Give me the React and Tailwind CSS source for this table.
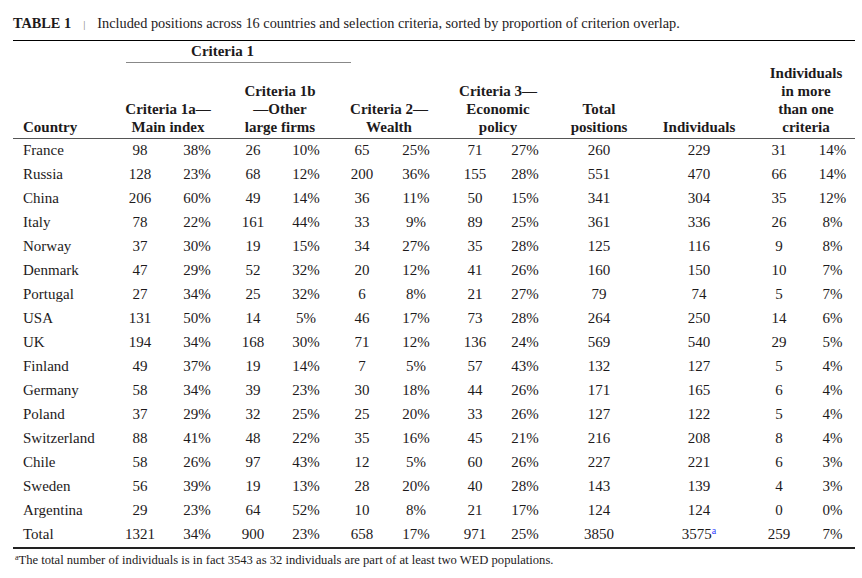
const rows = [
  ['France', 98, '38%', 26, '10%', 65, '25%', 71, '27%', 260, 229, 31, '14%'],
  ['Russia', 128, '23%', 68, '12%', 200, '36%', 155, '28%', 551, 470, 66, '14%'],
  ['China', 206, '60%', 49, '14%', 36, '11%', 50, '15%', 341, 304, 35, '12%'],
  ['Italy', 78, '22%', 161, '44%', 33, '9%', 89, '25%', 361, 336, 26, '8%'],
  ['Norway', 37, '30%', 19, '15%', 34, '27%', 35, '28%', 125, 116, 9, '8%'],
  ['Denmark', 47, '29%', 52, '32%', 20, '12%', 41, '26%', 160, 150, 10, '7%'],
  ['Portugal', 27, '34%', 25, '32%', 6, '8%', 21, '27%', 79, 74, 5, '7%'],
  ['USA', 131, '50%', 14, '5%', 46, '17%', 73, '28%', 264, 250, 14, '6%'],
  ['UK', 194, '34%', 168, '30%', 71, '12%', 136, '24%', 569, 540, 29, '5%'],
  ['Finland', 49, '37%', 19, '14%', 7, '5%', 57, '43%', 132, 127, 5, '4%'],
  ['Germany', 58, '34%', 39, '23%', 30, '18%', 44, '26%', 171, 165, 6, '4%'],
  ['Poland', 37, '29%', 32, '25%', 25, '20%', 33, '26%', 127, 122, 5, '4%'],
  ['Switzerland', 88, '41%', 48, '22%', 35, '16%', 45, '21%', 216, 208, 8, '4%'],
  ['Chile', 58, '26%', 97, '43%', 12, '5%', 60, '26%', 227, 221, 6, '3%'],
  ['Sweden', 56, '39%', 19, '13%', 28, '20%', 40, '28%', 143, 139, 4, '3%'],
  ['Argentina', 29, '23%', 64, '52%', 10, '8%', 21, '17%', 124, 124, 0, '0%'],
]

const widths = [107, 40, 74, 38, 68, 44, 64, 54, 46, 102, 98, 62, 45]

export default function App() {
  return (
    <div className="w-[862px] h-[578px] bg-white px-[13px] pt-[15px] text-[#1d1a1b] font-['Liberation_Serif',serif]">
      {/* Caption */}
      <p className="text-[14.3px] leading-[17px] whitespace-nowrap">
        <span className="font-bold">TABLE 1</span>
        <span className="inline-block mx-[12px] text-[11px] text-[#777]">|</span>
        Included positions across 16 countries and selection criteria, sorted by proportion of criterion overlap.
      </p>
      <div className="mt-[7px] w-[842px] border-t border-black" />

      <table className="w-[842px] table-fixed">
        <colgroup>
          {widths.map((w, i) => (
            <col key={i} style={{ width: w }} />
          ))}
        </colgroup>
        <thead className="text-[15px] font-bold leading-[18px]">
          <tr>
            <th />
            <th colSpan={4} className="p-0 pt-[1px]">
              <div className="ml-[6px] w-[225px] border-b border-[#888] pr-[32px] pb-[2px] text-center">Criteria 1</div>
            </th>
            <th colSpan={8} />
          </tr>
          <tr className="align-bottom">
            <th className="border-b border-[#555] pl-[10px] pb-[2px] text-left font-bold">Country</th>
            <th colSpan={2} className="border-b border-[#555] pr-[18px] pb-[2px] text-center">Criteria 1a—<br />Main index</th>
            <th colSpan={2} className="border-b border-[#555] pr-[14px] pb-[2px] text-center">Criteria 1b<br />—Other<br />large firms</th>
            <th colSpan={2} className="border-b border-[#555] pr-[10px] pb-[2px] text-center">Criteria 2—<br />Wealth</th>
            <th colSpan={2} className="border-b border-[#555] pb-[2px] text-center">Criteria 3—<br />Economic<br />policy</th>
            <th className="border-b border-[#555] pb-[2px] text-center">Total<br />positions</th>
            <th className="border-b border-[#555] pb-[2px] text-center">Individuals</th>
            <th colSpan={2} className="border-b border-[#555] pl-[9px] pt-[1px] pb-[2px] text-center">Individuals<br />in more<br />than one<br />criteria</th>
          </tr>
        </thead>
        <tbody className="text-[15px]">
          {rows.map((r) => (
            <tr key={r[0]} className="h-[24px]">
              {r.map((v, i) => (
                <td key={i} className={i === 0 ? 'pl-[10px] pb-[1px] text-left' : 'pb-[1px] text-center'}>{v}</td>
              ))}
            </tr>
          ))}
          <tr className="h-[25px] border-b-2 border-[#222]">
            <td className="pl-[10px]">Total</td>
            <td className="text-center">1321</td>
            <td className="text-center">34%</td>
            <td className="text-center">900</td>
            <td className="text-center">23%</td>
            <td className="text-center">658</td>
            <td className="text-center">17%</td>
            <td className="text-center">971</td>
            <td className="text-center">25%</td>
            <td className="text-center">3850</td>
            <td className="text-center">
              3575<sup className="text-[10px] text-[#2e3bff]">a</sup>
            </td>
            <td className="text-center">259</td>
            <td className="text-center">7%</td>
          </tr>
        </tbody>
      </table>

      {/* Footnote */}
      <p className="mt-[3px] pl-[2px] text-[12.6px] leading-[16px]">
        <sup className="text-[8px]">a</sup>The total number of individuals is in fact 3543 as 32 individuals are part of at least two WED populations.
      </p>
    </div>
  )
}
